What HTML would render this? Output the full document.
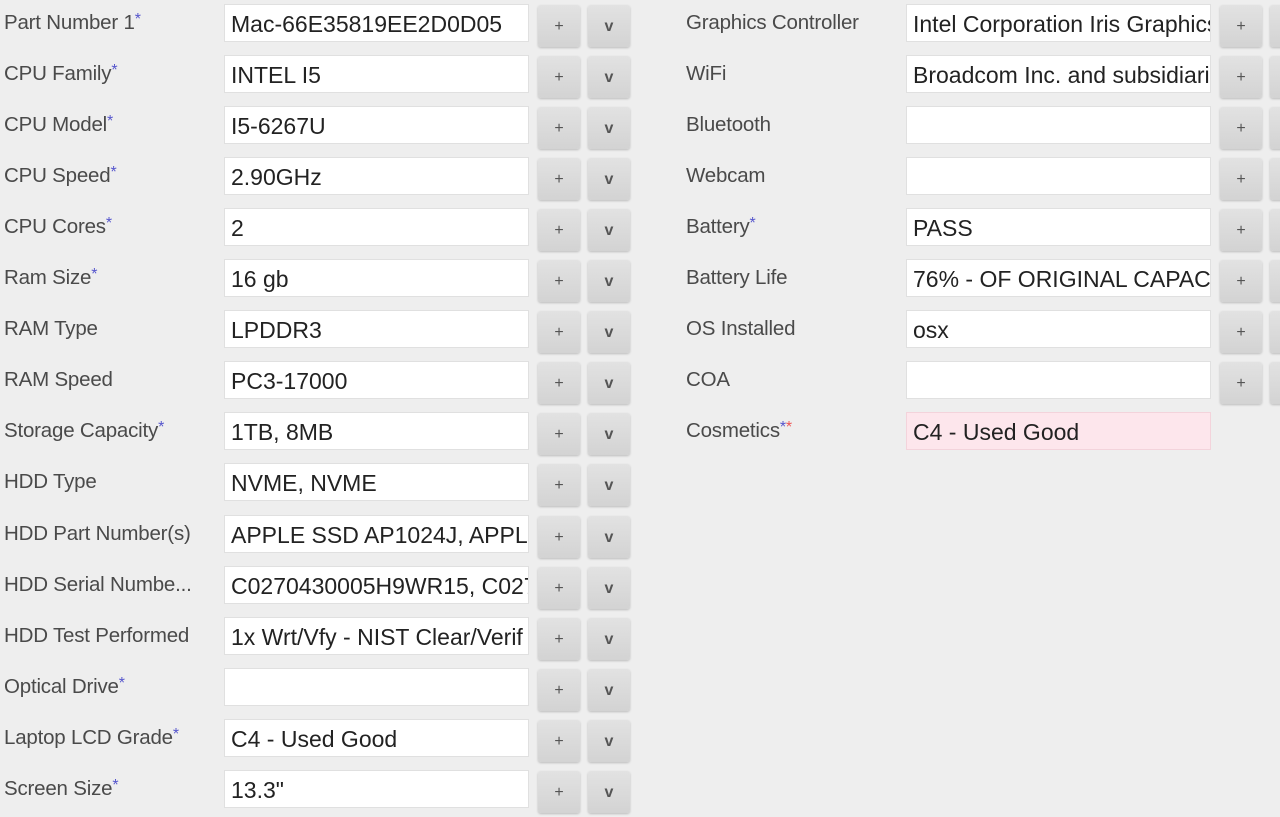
<!DOCTYPE html><html><head><style>
body{margin:0;background:#eeeeee;width:1280px;height:814px;overflow:hidden;position:relative;font-family:"Liberation Sans",sans-serif}
.r{position:absolute;height:51px;width:700px}
.l{position:absolute;left:4px;top:11px;font-size:20.5px;color:#4a4a4a;white-space:nowrap;letter-spacing:-0.2px}
.l b{color:#55c;font-weight:normal;font-size:16px;vertical-align:top}
.l i{color:#e55;font-style:normal;font-size:16px;vertical-align:top}
.in{position:absolute;left:224px;top:4px;height:38px;background:#fff;border:1px solid #e0e0e0;font-size:23px;line-height:38px;padding-left:6px;color:#222;overflow:hidden;white-space:nowrap;box-sizing:border-box;width:305px}
.pk{background:#fde6ec;border-color:#f3d3db}
.bt{position:absolute;top:5px;width:42px;height:42px;background:linear-gradient(#e2e2e2,#d3d3d3);border-radius:3px;box-shadow:0 1px 2px #bbb;color:#555;text-align:center;line-height:44px;font-size:16px}
.p{left:538px}.v{left:588px;font-weight:bold}
</style></head><body>
<div id="c"></div>
<script>
var L=[["Part Number 1","*","Mac-66E35819EE2D0D05"],["CPU Family","*","INTEL I5"],["CPU Model","*","I5-6267U"],["CPU Speed","*","2.90GHz"],["CPU Cores","*","2"],["Ram Size","*","16 gb"],["RAM Type","","LPDDR3"],["RAM Speed","","PC3-17000"],["Storage Capacity","*","1TB, 8MB"],["HDD Type","","NVME, NVME"],["HDD Part Number(s)","","APPLE SSD AP1024J, APPLE"],["HDD Serial Numbe...","","C0270430005H9WR15, C027"],["HDD Test Performed","","1x Wrt/Vfy - NIST Clear/Verif"],["Optical Drive","*",""],["Laptop LCD Grade","*","C4 - Used Good"],["Screen Size","*","13.3\""]];
var R=[["Graphics Controller","","Intel Corporation Iris Graphics"],["WiFi","","Broadcom Inc. and subsidiaries"],["Bluetooth","",""],["Webcam","",""],["Battery","*","PASS"],["Battery Life","","76% - OF ORIGINAL CAPACITY"],["OS Installed","","osx"],["COA","",""],["Cosmetics","**","C4 - Used Good"]];
var h="";
function row(a,i,x,pk){var s=a[1]=="**"?"<b>*</b><i>*</i>":(a[1]?"<b>*</b>":"");
h+='<div class="r" style="left:'+x+'px;top:'+(i*51.05)+'px"><div class="l">'+a[0]+s+'</div><div class="in'+(pk?' pk':'')+'">'+a[2]+'</div>'+(pk?'':'<div class="bt p">+</div><div class="bt v">v</div>')+'</div>';}
L.forEach(function(a,i){row(a,i,0,false)});
R.forEach(function(a,i){row(a,i,682,i==8)});
document.getElementById("c").innerHTML=h;
</script>
</body></html>
